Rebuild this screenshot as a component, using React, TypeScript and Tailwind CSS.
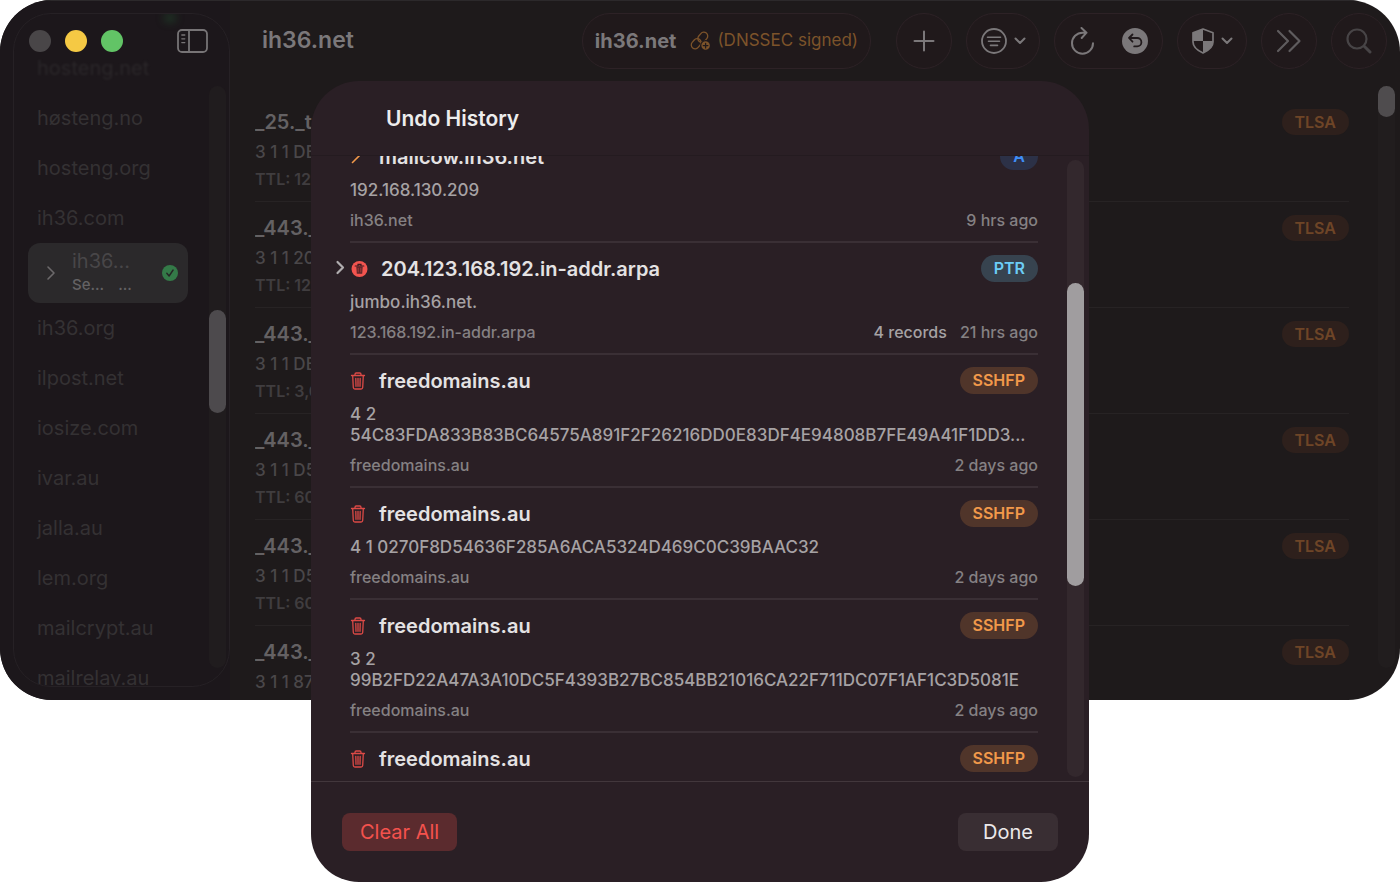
import type { ReactNode } from "react";
import clsx from "clsx";

type RecordKind = "A" | "PTR" | "SSHFP";

interface HistoryEntry {
  id: number;
  action: "edit" | "delete" | "deleteGroup";
  name: string;
  value: string[];
  zone: string;
  kind: RecordKind;
  age: string;
  count?: string;
}

const history: HistoryEntry[] = [
  { id: 1, action: "edit", name: "mailcow.ih36.net", value: ["192.168.130.209"], zone: "ih36.net", kind: "A", age: "9 hrs ago" },
  {
    id: 2,
    action: "deleteGroup",
    name: "204.123.168.192.in-addr.arpa",
    value: ["jumbo.ih36.net."],
    zone: "123.168.192.in-addr.arpa",
    kind: "PTR",
    age: "21 hrs ago",
    count: "4 records"
  },
  {
    id: 3,
    action: "delete",
    name: "freedomains.au",
    value: ["4 2", "54C83FDA833B83BC64575A891F2F26216DD0E83DF4E94808B7FE49A41F1DD3..."],
    zone: "freedomains.au",
    kind: "SSHFP",
    age: "2 days ago"
  },
  {
    id: 4,
    action: "delete",
    name: "freedomains.au",
    value: ["4 1 0270F8D54636F285A6ACA5324D469C0C39BAAC32"],
    zone: "freedomains.au",
    kind: "SSHFP",
    age: "2 days ago"
  },
  {
    id: 5,
    action: "delete",
    name: "freedomains.au",
    value: ["3 2", "99B2FD22A47A3A10DC5F4393B27BC854BB21016CA22F711DC07F1AF1C3D5081E"],
    zone: "freedomains.au",
    kind: "SSHFP",
    age: "2 days ago"
  },
  { id: 6, action: "delete", name: "freedomains.au", value: [], zone: "", kind: "SSHFP", age: "" }
];

const zonesAbove = ["hosteng.net", "høsteng.no", "hosteng.org", "ih36.com"];
const zonesBelow = ["ih36.org", "ilpost.net", "iosize.com", "ivar.au", "jalla.au", "lem.org", "mailcrypt.au", "mailrelay.au"];

const records = [
  { name: "_25._tcp", value: "3 1 1 DB", ttl: "TTL: 120" },
  { name: "_443._tcp", value: "3 1 1 20", ttl: "TTL: 120" },
  { name: "_443._tcp", value: "3 1 1 DB", ttl: "TTL: 3,600" },
  { name: "_443._tcp", value: "3 1 1 D5", ttl: "TTL: 600" },
  { name: "_443._tcp", value: "3 1 1 D5", ttl: "TTL: 600" },
  { name: "_443._tcp", value: "3 1 1 87", ttl: "" }
];

const kindStyle: Record<RecordKind, string> = {
  A: "bg-[#2c3147] text-[#3f8ef7]",
  PTR: "bg-[#37434f] text-[#6ccdf6]",
  SSHFP: "bg-[#50352a] text-[#f2994a]"
};

export default function App() {
  return (
    <div className="relative h-screen overflow-hidden bg-white font-['Inter',sans-serif]">
      <div className="flex h-[calc(100%-182px)] overflow-hidden rounded-[52px] bg-[#1e1a1b]">
        <Sidebar />
        <main className="flex min-w-0 flex-1 flex-col border-t border-[#2c292b]">
          <Toolbar />
          <RecordList />
        </main>
      </div>
      <UndoDialog />
    </div>
  );
}

function Sidebar() {
  return (
    <aside className="flex border-t border-[#2c292b] bg-[#1c171b] pt-3 pb-[13px] pl-[13px]">
      <div className="relative flex w-[217px] flex-col overflow-hidden rounded-[38px] border border-[#262125]">
        <span className="absolute top-0 left-[150px] h-2 w-3 rounded-full bg-[#22502f] opacity-60 blur-xs" />
        <div className="z-10 flex h-[54px] shrink-0 items-center gap-[14px] pl-[15px]">
          <button aria-label="Close" className="size-[22px] rounded-full bg-[#494648]" />
          <button aria-label="Minimize" className="size-[22px] rounded-full bg-[#f5c944]" />
          <button aria-label="Zoom" className="size-[22px] rounded-full bg-[#62c466]" />
          <button aria-label="Toggle sidebar" className="ml-[40px] text-[#777476]">
            <SidebarIcon />
          </button>
        </div>
        <nav className="-mt-[25px] flex min-h-0 flex-1 flex-col text-[20px] text-[#343133]">
          {zonesAbove.map((zone, i) => (
            <ZoneLink key={zone} name={zone} faded={i === 0} />
          ))}
          <a href="#ih36.net" className="ml-[14px] flex h-[60px] w-40 shrink-0 items-center rounded-xl bg-[#2b292b] pr-2.5 pl-[18px]">
            <svg viewBox="0 0 10 16" className="h-4 w-2.5 text-[#6c696b]" fill="none" stroke="currentColor" strokeWidth="1.6" strokeLinecap="round" strokeLinejoin="round">
              <path d="M2 2l6 6-6 6" />
            </svg>
            <span className="ml-4 flex flex-1 flex-col">
              <span className="leading-6 text-[#484648]">ih36...</span>
              <span className="flex gap-3.5 text-[15px] leading-6 font-medium text-[#646264]">
                <span>Se...</span>
                <span>...</span>
              </span>
            </span>
            <svg viewBox="0 0 16 16" className="size-4">
              <circle cx="8" cy="8" r="8" fill="#347a48" />
              <path d="M4.8 8.3l2.3 2.7 4-6" fill="none" stroke="#262626" strokeWidth="1.4" strokeLinecap="round" strokeLinejoin="round" />
            </svg>
          </a>
          {zonesBelow.map((zone) => (
            <ZoneLink key={zone} name={zone} />
          ))}
        </nav>
        <div className="absolute top-[72px] right-[3px] bottom-[18px] w-[17px] rounded-full bg-[#201c1e]">
          <div className="mt-[224px] h-[103px] rounded-full bg-[#4d4a4d]" />
        </div>
      </div>
    </aside>
  );
}

function ZoneLink({ name, faded }: { name: string; faded?: boolean }) {
  return (
    <a href={`#${name}`} className={clsx("flex h-[50px] shrink-0 items-center pl-[23px]", faded && "opacity-60 blur-[1px]")}>
      {name}
    </a>
  );
}

function Toolbar() {
  return (
    <header className="flex h-[95px] shrink-0 items-start gap-[14px] pt-3 pr-[13px] pl-8 text-[#7b787a]">
      <h1 className="mr-auto text-[23px] leading-[54px] font-semibold">ih36.net</h1>
      <div className="mr-[11px] flex h-14 items-center rounded-full border border-[#2d2226] bg-[#20191b] px-3">
        <strong className="text-[20px] font-bold">ih36.net</strong>
        <span className="flex items-center gap-[7px] pl-[14px] text-[17px] text-[#7c532a]">
          <LinkIcon />
          (DNSSEC signed)
        </span>
      </div>
      <ToolButton label="Add record" width="w-14">
        <svg viewBox="0 0 22 22" className="size-[22px]" fill="none" stroke="currentColor" strokeWidth="2" strokeLinecap="round">
          <path d="M11 1.5v19M1.5 11h19" />
        </svg>
      </ToolButton>
      <ToolButton label="Filter" width="w-[74px]">
        <svg viewBox="0 0 26 26" className="size-[26px]" fill="none" stroke="currentColor" strokeWidth="1.8" strokeLinecap="round">
          <circle cx="13" cy="13" r="12" />
          <path d="M6.5 9.2h13M7.5 13.2h11M9.5 17.4h7" strokeWidth="1.6" />
        </svg>
        <ChevronDown />
      </ToolButton>
      <div className="flex h-14 w-[109px] items-center justify-between rounded-full border border-[#2d2226] bg-[#20191b] px-[14px]">
        <button aria-label="Reload">
          <svg viewBox="0 0 26 28" className="h-7 w-[26px]" fill="none" stroke="currentColor" strokeWidth="2" strokeLinecap="round" strokeLinejoin="round">
            <path d="M24 16.2A10.500 10.500 0 1 1 13.500 5.700h4M12.500 1l5 4.700-4.800 5.300" />
          </svg>
        </button>
        <button aria-label="Undo history">
          <svg viewBox="0 0 26 26" className="size-[26px]">
            <circle cx="13" cy="13" r="13" fill="currentColor" />
            <path d="M10.5 6.5L7 10l3.5 3.7M7.3 10h7.9a4.2 4.2 0 0 1 0 8.4h-3" fill="none" stroke="#20191b" strokeWidth="1.8" strokeLinecap="round" strokeLinejoin="round" />
          </svg>
        </button>
      </div>
      <ToolButton label="Security" width="w-[70px]">
        <svg viewBox="0 0 22 26" className="h-[26px] w-[22px]">
          <path d="M11 1l10 3.800V14c0 5-4.500 8.500-10 11C5.500 22.500 1 19 1 14V4.800z" fill="none" stroke="currentColor" strokeWidth="1.7" strokeLinejoin="round" />
          <path d="M11 1v12H1V4.800zM11 13h10v1c0 5-4.500 8.500-10 11z" fill="currentColor" />
        </svg>
        <ChevronDown />
      </ToolButton>
      <ToolButton label="More" width="w-14">
        <svg viewBox="0 0 26 24" className="h-6 w-[26px] text-[#5f5c5e]" fill="none" stroke="currentColor" strokeWidth="2.2" strokeLinecap="round" strokeLinejoin="round">
          <path d="M2 2l10 10L2 22M13.500 2l10 10-10 10" />
        </svg>
      </ToolButton>
      <ToolButton label="Search" width="w-14">
        <svg viewBox="0 0 26 26" className="size-[26px] text-[#474446]" fill="none" stroke="currentColor" strokeWidth="2.2" strokeLinecap="round">
          <circle cx="11" cy="11" r="9.500" />
          <path d="M18.500 18.500l5.500 5.500" strokeWidth="3" />
        </svg>
      </ToolButton>
    </header>
  );
}

function ToolButton({ label, width, children }: { label: string; width: string; children: ReactNode }) {
  return (
    <button aria-label={label} className={clsx("flex h-14 shrink-0 items-center justify-center gap-[7px] rounded-full border border-[#2d2226] bg-[#20191b]", width)}>
      {children}
    </button>
  );
}

function RecordList() {
  return (
    <section className="relative min-h-0 flex-1 pr-[51px] pl-[25px]">
      <ul className="h-full overflow-hidden">
        {records.map((record, i) => (
          <li key={i} className="flex h-[106px] items-start justify-between border-b border-[#272324] pt-[13px]">
            <div>
              <div className="text-[20px] leading-[26px] font-semibold text-[#646163]">{record.name}</div>
              <div className="mt-[7px] text-[17px] leading-5 font-medium text-[#4a4749]">{record.value}</div>
              <div className="mt-2 text-[16px] leading-[18px] font-semibold text-[#403d3f]">{record.ttl}</div>
            </div>
            <span className="rounded-full bg-[#2e201c] px-[13px] text-[16px] leading-[26px] font-semibold text-[#6e4527]">TLSA</span>
          </li>
        ))}
      </ul>
      <div className="absolute -top-[10px] right-[5px] bottom-8 w-[17px] rounded-full bg-[#211d1e]">
        <div className="h-[31px] rounded-full bg-[#4f4c4e]" />
      </div>
    </section>
  );
}

function UndoDialog() {
  return (
    <div
      role="dialog"
      aria-labelledby="undo-title"
      className="absolute inset-x-0 top-[81px] bottom-0 mx-auto flex w-[778px] max-w-full flex-col overflow-hidden rounded-[48px] bg-[#2a1f25]"
    >
      <header className="h-[75px] shrink-0 border-b border-[#241b20] pl-[75px]">
        <h2 id="undo-title" className="text-[21px] leading-[76px] font-semibold text-[#ededed]">
          Undo History
        </h2>
      </header>
      <div className="relative min-h-0 flex-1 border-b border-[#42373c]">
        <div className="h-full overflow-hidden pr-[51px] pl-[39px]">
          <ul className="-mt-[25px]">
            {history.map((entry) => (
              <HistoryRow key={entry.id} entry={entry} />
            ))}
          </ul>
        </div>
        <div className="absolute top-1 right-[5px] bottom-1 w-[17px] rounded-full bg-[#33282d]">
          <div className="mt-[123px] h-[303px] rounded-full bg-[#a09d9f]" />
        </div>
      </div>
      <footer className="flex h-[100px] shrink-0 items-center justify-between px-[31px]">
        <button className="h-[38px] rounded-lg bg-[#5b2b2e] px-[18px] text-[20px] text-[#f4524d]">Clear All</button>
        <button className="h-[38px] rounded-lg bg-[#392e33] px-[25px] text-[20px] text-[#ebe9ea]">Done</button>
      </footer>
    </div>
  );
}

function HistoryRow({ entry }: { entry: HistoryEntry }) {
  return (
    <li className="relative border-b-2 border-[#3a2f35] pt-3 pb-[11px]">
      {entry.action === "deleteGroup" && (
        <button aria-label="Expand" className="absolute top-[17px] -left-[15px] text-[#b0adaf]">
          <svg viewBox="0 0 10 15" className="h-[15px] w-2.5" fill="none" stroke="currentColor" strokeWidth="2.200" strokeLinecap="round" strokeLinejoin="round">
            <path d="M2.500 2l5.500 5.500L2.500 13" />
          </svg>
        </button>
      )}
      <div className="flex h-[27px] items-center gap-[13px]">
        <ActionIcon action={entry.action} />
        <span className="flex-1 text-[20px] font-semibold text-[#e4e2e3]">{entry.name}</span>
        <span className={clsx("rounded-full px-[13px] text-[16px] leading-[27px] font-semibold", kindStyle[entry.kind])}>{entry.kind}</span>
      </div>
      <div className="mt-2.5 text-[17px] leading-[21px] font-medium text-[#a6a2a4]">
        {entry.value.map((line) => (
          <div key={line} className="whitespace-nowrap">
            {line}
          </div>
        ))}
      </div>
      <div className="mt-[9px] flex h-5 items-center gap-[13px] text-[16px] font-medium text-[#858183]">
        <span className="flex-1">{entry.zone}</span>
        {entry.count && <span className="text-[#a6a2a4]">{entry.count}</span>}
        <span>{entry.age}</span>
      </div>
    </li>
  );
}

function ActionIcon({ action }: { action: HistoryEntry["action"] }) {
  if (action === "edit") {
    return (
      <svg viewBox="0 0 16 18" className="h-[18px] w-4" fill="none" stroke="#f2994a" strokeWidth="1.600" strokeLinecap="round">
        <path d="M2.500 14.500L12 5" />
      </svg>
    );
  }
  if (action === "deleteGroup") {
    return (
      <svg viewBox="0 0 18 18" className="size-[18px]">
        <circle cx="9.500" cy="9" r="8" fill="#f2544f" />
        <path d="M6.300 6.500h6.400l-.5 7.300H6.800z" fill="#5c2529" />
        <path d="M5.200 6h8.600M8 5.700V4.400h3v1.300" fill="none" stroke="#3a1b20" strokeWidth="1.200" strokeLinecap="round" />
        <path d="M8.200 7.800v4.600M10.800 7.800v4.600" stroke="#c4443f" strokeWidth=".7" />
      </svg>
    );
  }
  return (
    <svg viewBox="0 0 16 18" className="h-[18px] w-4" fill="none" stroke="#dc4a46" strokeWidth="1.300" strokeLinecap="round" strokeLinejoin="round">
      <path d="M1.500 3.500h13M5 3.300V2.200C5 1.400 5.400 1 6.200 1h3.600c.8 0 1.200.4 1.200 1.200v1.100M2.700 3.700l.6 11.800c.1 1 .7 1.500 1.600 1.500h6.200c.9 0 1.500-.5 1.600-1.500l.6-11.800M5.800 6.300l.2 8M8 6.300v8M10.200 6.300l-.2 8" />
    </svg>
  );
}

function ChevronDown() {
  return (
    <svg viewBox="0 0 12 8" className="h-2 w-3" fill="none" stroke="currentColor" strokeWidth="2" strokeLinecap="round" strokeLinejoin="round">
      <path d="M1.500 1.500L6 6l4.500-4.500" />
    </svg>
  );
}

function SidebarIcon() {
  return (
    <svg viewBox="0 0 31 24" className="h-6 w-[31px]" fill="none" stroke="currentColor" strokeWidth="1.800" strokeLinecap="round">
      <rect x="1" y="1" width="29" height="22" rx="4" />
      <path d="M12 1v22" />
      <path d="M4.800 6h3M4.800 9.800h3M4.800 13.600h3" strokeWidth="1.300" />
    </svg>
  );
}

function LinkIcon() {
  return (
    <svg viewBox="0 0 20 20" className="size-5" fill="none" stroke="currentColor" strokeWidth="1.300" strokeLinecap="round">
      <rect x="-5.500" y="-3.900" width="11" height="7.800" rx="3.900" transform="translate(12.800 6.300) rotate(-50)" />
      <rect x="-5.500" y="-3.900" width="11" height="7.800" rx="3.900" transform="translate(6.200 12.700) rotate(-50)" />
      <circle cx="15.600" cy="14.600" r="4.900" fill="currentColor" stroke="#20191b" />
      <path d="M15.600 12.300v4.600M13.300 14.600h4.600" stroke="#20191b" />
    </svg>
  );
}
